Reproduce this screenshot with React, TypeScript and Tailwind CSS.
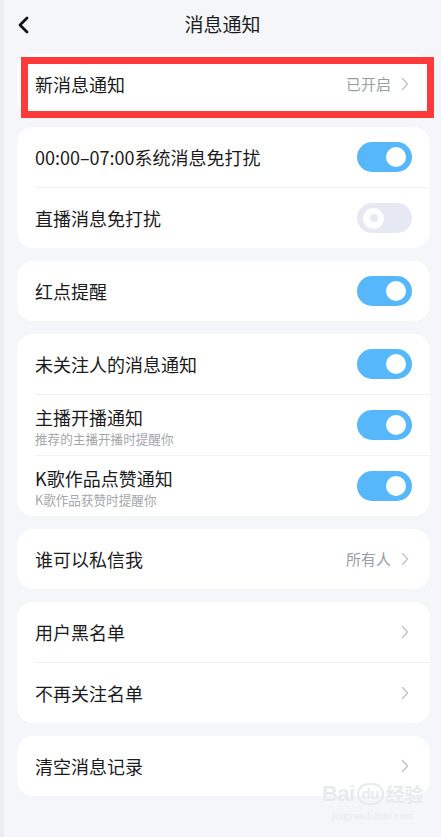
import { ReactNode } from "react";

const font = {
  fontFamily: '"Noto Sans CJK SC", "Noto Sans", sans-serif',
};

function Chevron() {
  return (
    <svg width="8" height="14" viewBox="0 0 8 14" className="ml-[10px]">
      <polyline
        points="1.5,1.5 6.5,7 1.5,12.5"
        fill="none"
        stroke="#c3c4c9"
        strokeWidth="1.4"
        strokeLinecap="round"
        strokeLinejoin="round"
      />
    </svg>
  );
}

function Toggle({ on }: { on: boolean }) {
  if (on) {
    return (
      <div className="w-[55px] h-[30px] rounded-full bg-[#56b8fa] flex items-center justify-end pr-[6px]">
        <div className="w-[20px] h-[20px] rounded-full bg-white" />
      </div>
    );
  }
  return (
    <div className="w-[55px] h-[30px] rounded-full bg-[#e6e8f3] flex items-center pl-[6px]">
      <div className="w-[21px] h-[21px] rounded-full bg-white flex items-center justify-center">
        <div className="w-[8px] h-[8px] rounded-full bg-[#e6e8f3]" />
      </div>
    </div>
  );
}

function Row({
  title,
  sub,
  right,
  divider,
}: {
  title: string;
  sub?: string;
  right: ReactNode;
  divider?: boolean;
}) {
  return (
    <div className="pl-[18px]">
      {divider && <div className="h-px bg-[#f0f1f5]" />}
      <div className="h-[60px] flex items-center pr-[18px]">
        <div className={sub ? "flex-1 flex flex-col pt-[3px]" : "flex-1 flex flex-col"}>
          <div className="text-[18px] leading-[24px] text-[#1b1b1d]">{title}</div>
          {sub && (
            <div className="text-[12.6px] leading-[20px] text-[#a5a6ab]">{sub}</div>
          )}
        </div>
        {right}
      </div>
    </div>
  );
}

function Link({ value }: { value?: string }) {
  return (
    <div className="flex items-center pr-[3px]">
      {value && <span className="text-[15px] text-[#9c9da3]">{value}</span>}
      <Chevron />
    </div>
  );
}

function Card({ children }: { children: ReactNode }) {
  return <div className="bg-white rounded-[16px] overflow-hidden">{children}</div>;
}

export default function App() {
  return (
    <div className="relative w-[441px] h-[837px] bg-[#f5f6fa] flex" style={font}>
      <div className="w-[4px] h-full bg-[#ececee]" />
      <div className="flex-1 flex flex-col">
        <header className="h-[54px] relative flex items-start justify-center pt-[10px]">
          <svg
            width="14"
            height="18"
            viewBox="0 0 14 18"
            className="absolute left-[13px] top-[16px]"
          >
            <polyline
              points="10,2 3,9 10,16"
              fill="none"
              stroke="#111"
              strokeWidth="2.8"
              strokeLinecap="round"
              strokeLinejoin="round"
            />
          </svg>
          <h1 className="text-[19px] leading-[28px] text-[#1b1b1d] font-normal">消息通知</h1>
        </header>

        <div className="ml-[13px] mr-[11px] flex flex-col gap-[13px]">
          <Card>
            <Row title="新消息通知" right={<Link value="已开启" />} />
          </Card>
          <Card>
            <Row title="00:00–07:00系统消息免打扰" right={<Toggle on />} />
            <Row title="直播消息免打扰" right={<Toggle on={false} />} divider />
          </Card>
          <Card>
            <Row title="红点提醒" right={<Toggle on />} />
          </Card>
          <Card>
            <Row title="未关注人的消息通知" right={<Toggle on />} />
            <Row
              title="主播开播通知"
              sub="推荐的主播开播时提醒你"
              right={<Toggle on />}
              divider
            />
            <Row
              title="K歌作品点赞通知"
              sub="K歌作品获赞时提醒你"
              right={<Toggle on />}
              divider
            />
          </Card>
          <Card>
            <Row title="谁可以私信我" right={<Link value="所有人" />} />
          </Card>
          <Card>
            <Row title="用户黑名单" right={<Link />} />
            <Row title="不再关注名单" right={<Link />} divider />
          </Card>
          <Card>
            <Row title="清空消息记录" right={<Link />} />
          </Card>
        </div>
      </div>

      {/* annotation box */}
      <div className="absolute left-[21px] top-[57px] w-[413px] h-[61px] border-[7px] border-[#fc3a3a]" />

      {/* watermark */}
      <div className="absolute left-[322px] top-[780px] flex flex-col items-center pointer-events-none">
        <div className="flex items-center text-[22px] leading-[28px] font-bold text-[#e9eaef] tracking-tight">
          <span style={{ fontFamily: '"Liberation Sans", sans-serif' }}>Bai</span>
          <span className="mx-[2px] px-[3px] rounded-full border-2 border-[#e9eaef] text-[15px] leading-[18px]" style={{ fontFamily: '"Liberation Sans", sans-serif' }}>du</span>
          <span className="text-[19px]">经验</span>
        </div>
        <div className="text-[11px] leading-[14px] text-[#e9eaef]" style={{ fontFamily: '"Liberation Serif", serif' }}>
          jingyan.baidu.com
        </div>
      </div>
    </div>
  );
}
